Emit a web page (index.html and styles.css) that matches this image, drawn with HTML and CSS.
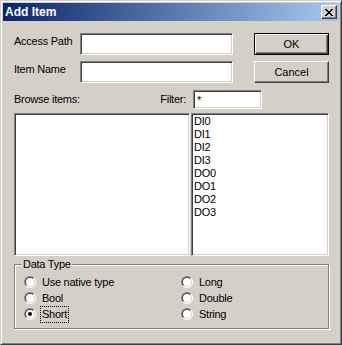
FILE: index.html
```html
<!DOCTYPE html>
<html>
	<head>
		<title>Add Item</title>
		<link rel="stylesheet" href="styles.css">
	</head>
	<body>
		<div class="window">
			<div class="titlebar">
				<span class="title">Add Item</span>
				<span class="close">
					<svg width="8" height="7" viewBox="0 0 8 7"><path d="M0 0h2v1H0z M6 0h2v1H6z M1 1h2v1H1z M5 1h2v1H5z M2 2h4v1H2z M3 3h2v1H3z M2 4h4v1H2z M1 5h2v1H1z M5 5h2v1H5z M0 6h2v1H0z M6 6h2v1H6z" fill="#000"/></svg>
				</span>
			</div>
			<div class="content">
				<div class="top">
					<div class="fields">
						<label class="lbl">Access Path</label>
						<input type="text" class="field">
						<label class="lbl">Item Name</label>
						<input type="text" class="field">
					</div>
					<div class="buttons">
						<button class="btn default">OK</button>
						<button class="btn">Cancel</button>
					</div>
				</div>
				<div class="browsebar">
					<span class="browse">Browse items:</span>
					<label class="filterlbl">Filter:</label>
					<input type="text" class="field filter" value="*">
				</div>
				<div class="lists">
					<div class="list tree"></div>
					<ul class="list items">
						<li>DI0</li>
						<li>DI1</li>
						<li>DI2</li>
						<li>DI3</li>
						<li>DO0</li>
						<li>DO1</li>
						<li>DO2</li>
						<li>DO3</li>
					</ul>
				</div>
				<fieldset class="group">
					<legend>Data Type</legend>
					<div class="radios">
						<label class="radio"><span class="dot"></span>Use native type</label>
						<label class="radio"><span class="dot"></span>Bool</label>
						<label class="radio"><span class="dot checked"></span><span class="focus">Short</span></label>
						<label class="radio"><span class="dot"></span>Long</label>
						<label class="radio"><span class="dot"></span>Double</label>
						<label class="radio"><span class="dot"></span>String</label>
					</div>
				</fieldset>
			</div>
		</div>
	</body>
</html>
```
FILE: styles.css
```css
body{
	margin: 0;
	font-family: "Liberation Sans", Arial, sans-serif;
	font-size: 11px;
	line-height: 13px;
	letter-spacing: -0.25px;
	color: #000;
}
.window{
	width: 342px;
	height: 345px;
	box-sizing: border-box;
	background: #D4D0C8;
	border: 1px solid;
	border-color: #D4D0C8 #404040 #404040 #D4D0C8;
	box-shadow: inset 1px 1px 0 #fff, inset -1px -1px 0 #808080;
	padding: 2px;
}
.titlebar{
	height: 18px;
	background: linear-gradient(to right, #0A246A, #A6CAF0);
	display: flex;
	align-items: center;
	justify-content: space-between;
	padding: 0 2px;
}
.title{
	color: #fff;
	font-weight: bold;
	font-size: 12px;
	letter-spacing: 0;
}
.close{
	width: 16px;
	height: 14px;
	box-sizing: border-box;
	background: #D4D0C8;
	border: 1px solid;
	border-color: #fff #404040 #404040 #fff;
	box-shadow: inset -1px -1px 0 #808080;
	display: flex;
	align-items: center;
	justify-content: center;
}
.close svg{
	display: block;
}
.content{
	padding: 12px 10px 0 11px;
}
.top{
	display: flex;
}
.fields{
	display: grid;
	grid-template-columns: 66px 153px;
	grid-auto-rows: 22px;
	row-gap: 6px;
}
.lbl{
	padding-top: 2px;
}
.field{
	box-sizing: border-box;
	width: 153px;
	height: 22px;
	margin: 0;
	padding: 0 3px;
	border: 1px solid;
	border-color: #808080 #fff #fff #808080;
	box-shadow: inset 1px 1px 0 #404040, inset -1px -1px 0 #D4D0C8;
	background: #fff;
	font: inherit;
	outline: none;
}
.buttons{
	margin-left: 21px;
	display: flex;
	flex-direction: column;
	gap: 6px;
}
.btn{
	width: 75px;
	height: 22px;
	box-sizing: border-box;
	margin: 0;
	padding: 0;
	background: #D4D0C8;
	font: inherit;
	color: #000;
	border: 1px solid;
	border-color: #fff #404040 #404040 #fff;
	box-shadow: inset -1px -1px 0 #808080;
}
.btn.default{
	border-color: #000;
	box-shadow: inset 1px 1px 0 #fff, inset -1px -1px 0 #404040, inset -2px -2px 0 #808080;
}
.browsebar{
	display: flex;
	align-items: flex-end;
	width: 248px;
	height: 19px;
	margin-top: 7px;
}
.browse{
	flex: 1;
	padding-bottom: 3px;
}
.filterlbl{
	margin-right: 7px;
	padding-bottom: 3px;
}
.field.filter{
	width: 69px;
	height: 19px;
	padding: 0 3px;
}
.lists{
	display: flex;
	gap: 1px;
	height: 143px;
	margin-top: 4px;
}
.list{
	box-sizing: border-box;
	height: 143px;
	margin: 0;
	border: 1px solid;
	border-color: #808080 #fff #fff #808080;
	box-shadow: inset 1px 1px 0 #404040, inset -1px -1px 0 #D4D0C8;
	background: #fff;
}
.tree{
	width: 176px;
}
.items{
	width: 138px;
	padding: 1px 2px;
	list-style: none;
}
.group{
	margin: 2px 0 0;
	padding: 3px 7px 6px;
	width: 315px;
	box-sizing: border-box;
	min-width: 0;
	border: 1px solid #808080;
	box-shadow: 1px 1px 0 #fff, inset 1px 1px 0 #fff;
}
.group legend{
	padding: 0 1px;
	background: #D4D0C8;
}
.radios{
	display: grid;
	grid-template-columns: 157px auto;
	grid-template-rows: repeat(3, 16px);
	grid-auto-flow: column;
	padding-left: 2px;
}
.radio{
	display: flex;
	align-items: center;
	gap: 6px;
}
.dot{
	position: relative;
	width: 12px;
	height: 12px;
	box-sizing: border-box;
	border-radius: 50%;
	border: 1px solid;
	border-color: #808080 #fff #fff #808080;
	background: #fff;
}
.dot::before{
	content: "";
	position: absolute;
	inset: 0;
	border-radius: 50%;
	border: 1px solid;
	border-color: #404040 #D4D0C8 #D4D0C8 #404040;
}
.dot.checked::after{
	content: "";
	position: absolute;
	left: 3px;
	top: 3px;
	width: 4px;
	height: 4px;
	border-radius: 50%;
	background: #000;
}
.focus{
	outline: 1px dotted #000;
	outline-offset: 1px;
}
```
